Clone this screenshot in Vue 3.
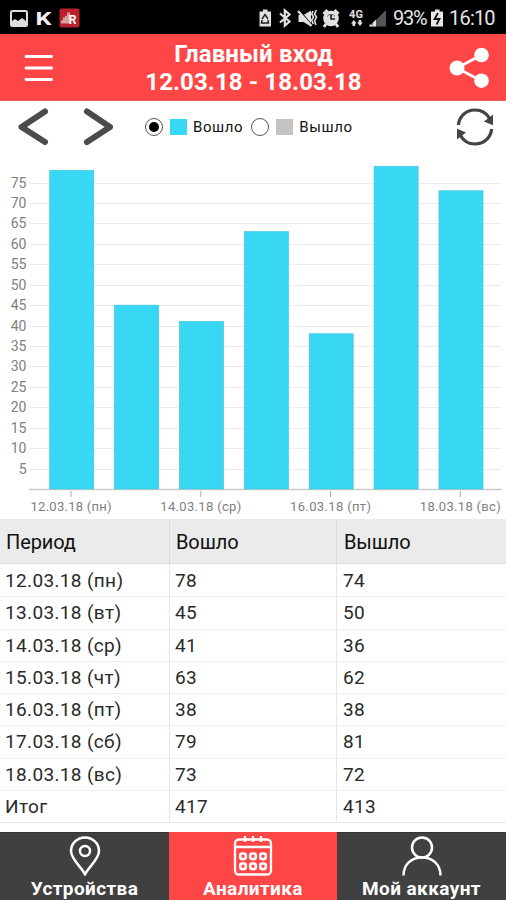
<script setup>
const rows = [
  { day: '12.03.18 (пн)', entered: 78, left: 74 },
  { day: '13.03.18 (вт)', entered: 45, left: 50 },
  { day: '14.03.18 (ср)', entered: 41, left: 36 },
  { day: '15.03.18 (чт)', entered: 63, left: 62 },
  { day: '16.03.18 (пт)', entered: 38, left: 38 },
  { day: '17.03.18 (сб)', entered: 79, left: 81 },
  { day: '18.03.18 (вс)', entered: 73, left: 72 },
]
const total = { day: 'Итог', entered: 417, left: 413 }

// Chart geometry, in SVG user units
const BASE = 339
const UNIT = 4.085
const ticks = Array.from({ length: 15 }, (_, i) => (i + 1) * 5)
const y = (v) => BASE - v * UNIT
const x = (i) => 49.7 + i * 64.88
</script>

<template>
  <div class="screen">
    <div class="status">
      <svg class="status-icons" width="82" height="34" viewBox="0 0 82 34">
        <rect x="11" y="11" width="16" height="15" rx="1.5" fill="none" stroke="#ddd" stroke-width="2" />
        <path d="M12 21l3-2 3 2 4-3 4 3v4H12z" fill="#ddd" />
        <text x="35.500" y="25" class="k-letter" textLength="16" lengthAdjust="spacingAndGlyphs">K</text>
        <rect x="59.500" y="8.500" width="20" height="19" rx="2" fill="#b9202b" />
        <path d="M61 23.500v-3h2v-3h2v-2l2 1v-4h3v11z" fill="#dba0a0" />
        <text x="68.800" y="23.600" class="app-letter">R</text>
      </svg>
      <svg class="status-icons" width="132" height="34" viewBox="256 0 132 34">
        <g fill="#e2e2e2">
          <path d="M263 9.500h4.500v2H271V26.500H259.500v-15H263z" />
          <path d="M262 19l3-4.500 3 4.500M262 20l-.5 3h7l-.5-3" fill="none" stroke="#222" stroke-width="1.500" />
          <path d="M280 13.500l9.500 8-4.700 4V10.500l4.700 4-9.500 8" fill="none" stroke="#e2e2e2" stroke-width="2.200" />
          <path d="M298.500 15h5l7.500-4.500v16l-7.500-4.500h-5z" />
          <path d="M299.500 10.500l12 14" stroke="#000" stroke-width="1.200" />
          <path d="M298 11l13.500 15" stroke="#e2e2e2" stroke-width="2.200" />
          <path d="M313 11l-1.300 3 1.800 3-1.800 3 1.500 4M316.500 10l-2 4 2 3-2 4 1.500 4" fill="none" stroke="#e2e2e2" stroke-width="1.600" />
          <circle cx="331" cy="18.500" r="7.800" />
          <path d="M323.500 14l4-4M338.500 14l-4-4M326 24l-2 3M336 24l2 3" stroke="#e2e2e2" stroke-width="3" />
          <path d="M331 14.500v4.500h4" fill="none" stroke="#222" stroke-width="1.700" />
          <path d="M327 16.500a4.800 4.800 0 0 1 8 0" fill="none" stroke="#555" stroke-width="1" />
          <text x="349" y="18" class="net" textLength="14">4G</text>
          <path d="M351 23.500l2.800-3.500 2.800 3.500h-1.500v2.500h-2.600v-2.500zM357.200 22.500l2.800 3.500 2.800-3.500h-1.500v-2.500h-2.600v2.500z" />
          <path d="M386 10v16.500h-16.500z" fill="#555" />
          <path d="M369.500 24.500h2.500v2h-2.500zM372.500 23l3.500-3.500v7h-3.500z" />
        </g>
      </svg>
      <span class="percent">93%</span>
      <svg class="battery" width="14" height="34" viewBox="0 0 14 34">
        <path d="M5 9.500h4.500v2H13v15H1v-15h4z" fill="#e8e8e8" />
        <path d="M8 13l-3.500 6h5L6.500 24.500" fill="none" stroke="#111" stroke-width="1.800" />
      </svg>
      <span class="clock">16:10</span>
    </div>

    <header class="header">
      <svg class="menu" width="32" height="30" viewBox="0 0 32 30">
        <path d="M4 3.500h25.500M4 15h25.500M4 26.500h25.500" stroke="#fff" stroke-width="2.900" stroke-linecap="round" />
      </svg>
      <h1 class="title"><span class="place">Главный вход</span><span class="range">12.03.18 - 18.03.18</span></h1>
      <svg class="share" width="42" height="42" viewBox="0 0 42 42">
        <path d="M33.500 8L9 21l24.500 13" fill="none" stroke="#fff" stroke-width="2.800" />
        <g fill="#fff"><circle cx="33.500" cy="8" r="7.300" /><circle cx="9" cy="21" r="7.500" /><circle cx="33.500" cy="33.700" r="7.300" /></g>
      </svg>
    </header>

    <div class="toolbar">
      <svg class="arrow" width="32" height="40" viewBox="0 0 32 40">
        <path d="M27 4.500L3.500 20 27 35" fill="none" stroke="#4b4b4b" stroke-width="6" stroke-linecap="round" stroke-linejoin="round" />
      </svg>
      <svg class="arrow next" width="32" height="40" viewBox="0 0 32 40">
        <path d="M5 4.500L28 20 5 35" fill="none" stroke="#4b4b4b" stroke-width="6" stroke-linecap="round" stroke-linejoin="round" />
      </svg>
      <div class="legend">
        <i class="radio on"></i><i class="swatch cyan"></i><span class="name first">Вошло</span>
        <i class="radio"></i><i class="swatch gray"></i><span class="name">Вышло</span>
      </div>
      <svg class="refresh" width="38" height="40" viewBox="0 0 38 40">
        <path d="M2.300 18C3.500 8.500 10.500 3 19 3c6.500 0 11.500 3 14.500 8.500M35.700 22C34.500 31.500 27.500 37 19 37c-6.500 0-11.500-3-14.500-8.500" fill="none" stroke="#444" stroke-width="3.200" />
        <path d="M37 7.500V18.300L28 14.500zM1 32.500V21.700l9 3.800z" fill="#444" />
      </svg>
    </div>

    <svg class="chart" width="506" height="367" viewBox="0 0 506 367">
      <g v-for="t in ticks" :key="t">
        <path :d="`M29 ${Math.round(y(t)) + 0.5}H501`" stroke="#ececec" />
        <text class="tick" x="26.500" :y="y(t) + 5" text-anchor="end">{{ t }}</text>
      </g>
      <path d="M29 339.500H502" stroke="#ccc" stroke-width="1.500" />
      <g v-for="(r, i) in rows" :key="r.day">
        <rect :x="x(i)" :y="y(r.entered)" width="44" :height="r.entered * UNIT" fill="#38d7f4" stroke="#3fc6dc" stroke-width="0.700" />
        <template v-if="i % 2 === 0">
          <path :d="`M${x(i) + 21.3} 341v6`" stroke="#aaa" />
          <text class="day" :x="x(i) + 21.300" y="360.800" text-anchor="middle" textLength="81">{{ r.day }}</text>
        </template>
      </g>
    </svg>

    <div class="table">
      <div class="tr head"><span>Период</span><span>Вошло</span><span>Вышло</span></div>
      <div v-for="r in [...rows, total]" :key="r.day" class="tr">
        <span>{{ r.day }}</span><span>{{ r.entered }}</span><span>{{ r.left }}</span>
      </div>
    </div>

    <nav class="nav">
      <a class="tab">
        <svg width="40" height="42" viewBox="0 0 40 42">
          <path d="M20 38.500C17.500 32 6 23.500 6 15a14 13.500 0 0 1 28 0c0 8.500-11.500 17-14 23.500z" fill="none" stroke="#fff" stroke-width="2.500" stroke-linejoin="round" />
          <circle cx="20" cy="15" r="5" fill="none" stroke="#fff" stroke-width="2.500" />
        </svg>
        <span>Устройства</span>
      </a>
      <a class="tab active">
        <svg width="40" height="42" viewBox="0 0 40 42">
          <g fill="none" stroke="#fff" stroke-width="2.300">
            <rect x="2" y="3.500" width="36" height="35" rx="4" />
            <path d="M2 11h36M12 0v6M20 0v6M28 0v6" />
            <g stroke-width="2.600">
              <rect v-for="n in 6" :key="n" :x="7.200 + ((n - 1) % 3) * 10" :y="n < 4 ? 17.500 : 27.500" width="5.600" height="5.600" rx="2" />
            </g>
          </g>
        </svg>
        <span>Аналитика</span>
      </a>
      <a class="tab">
        <svg width="42" height="42" viewBox="0 0 42 42">
          <g fill="none" stroke="#fff" stroke-width="2.500">
            <circle cx="21" cy="11.500" r="10" />
            <path d="M2.500 39.500C2.500 28 11 21.500 21 21.500S39.500 28 39.500 39.500" />
          </g>
        </svg>
        <span>Мой аккаунт</span>
      </a>
    </nav>
  </div>
</template>

<style>
body { background: #fff; }
</style>

<style scoped>
.screen { width: 506px; height: 900px; display: flex; flex-direction: column; overflow: hidden; background: #fff; font-family: Roboto, "Noto Sans", sans-serif; color: #2a2a2a; }
.status { height: 34px; flex: none; background: #000; display: flex; color: #e6e6e6; font-size: 20px; line-height: 37px; }
.status-icons + .status-icons { margin-left: 174px; }
.k-letter { font-size: 19px; font-weight: 700; fill: #f2f2f2; }
.app-letter { font-size: 12px; font-weight: 700; fill: #fff; }
.net { font-size: 11px; font-weight: 700; }
.percent { width: 36px; margin-left: 5px; letter-spacing: -1.200px; }
.battery { margin-left: 1px; }
.clock { margin-left: 5px; letter-spacing: -0.800px; }
.header { height: 67px; flex: none; box-sizing: border-box; padding: 2px 16px 0 22px; display: flex; align-items: center; justify-content: space-between; background: #ff4646; border-bottom: 1px solid #f65a5a; }
.title { margin: 0; padding-left: 5px; display: flex; flex-direction: column; align-items: center; color: #fff; font-size: 24px; line-height: 28px; font-weight: 700; }
.place { letter-spacing: 0.150px; }
.range { letter-spacing: 0.100px; }
.toolbar { height: 51px; flex: none; box-sizing: border-box; padding: 0 12px 0 18px; display: flex; align-items: center; }
.next { margin-left: 32px; }
.legend { margin-left: 31px; display: flex; align-items: center; font-size: 15px; color: #111; }
.radio { width: 18px; height: 18px; box-sizing: border-box; border: 1px solid #555; border-radius: 50%; }
.radio.on { display: grid; place-items: center; }
.radio.on::after { content: ""; width: 10px; height: 10px; border-radius: 50%; background: #000; }
.swatch { width: 17px; height: 16px; margin-left: 7px; margin-right: 6px; }
.cyan { background: #38d7f4; }
.gray { background: #c3c3c3; }
.name { letter-spacing: 0.600px; }
.first { margin-right: 8px; }
.refresh { margin-left: auto; }
.chart { flex: none; display: block; margin-top: -2px; }
.tick { font-size: 14px; fill: #808080; }
.day { font-size: 13px; fill: #808080; }
.table { flex: none; margin-top: 2px; border-bottom: 1px solid #e6e6e6; }
.tr { height: 32.300px; display: grid; grid-template-columns: 170px 167px 1fr; font-size: 19px; line-height: 31px; letter-spacing: 0.350px; }
.tr span { box-sizing: border-box; padding-left: 5px; border-top: 1px solid #ededed; border-right: 1px solid #e6e6e6; }
.tr span:last-child { border-right: 0; padding-left: 6px; }
.tr.head { height: 45px; background: #ebebeb; line-height: 46px; font-size: 20px; letter-spacing: -0.100px; color: #111; }
.tr.head span { height: 45px; overflow: hidden; border-top: 0; border-right-color: #ddd; border-bottom: 1px solid #ddd; padding-left: 6px; }
.tr.head span:last-child { padding-left: 7px; }
.tr.head + .tr span { border-top-color: transparent; }
.nav { height: 68px; flex: none; margin-top: auto; display: grid; grid-template-columns: 169px 168px 169px; }
.tab { box-sizing: border-box; padding-top: 3px; display: flex; flex-direction: column; align-items: center; background: #404040; color: #fff; font-size: 19px; line-height: 21px; letter-spacing: 0.400px; font-weight: 700; border-top: 1px solid #333; }
.tab.active { background: #ff4646; border-top-color: #ff4646; }
</style>
